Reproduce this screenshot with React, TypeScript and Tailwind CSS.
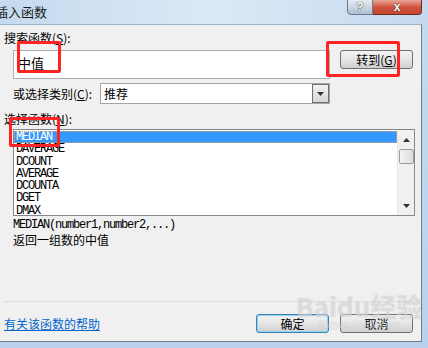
import React from "react";

const cjk = "font-['Noto_Sans_CJK_SC','Microsoft_YaHei',sans-serif]";
const mono = "font-['Liberation_Mono',monospace]";

const Arrow = ({ up, className }: { up?: boolean; className?: string }) => (
  <svg width="7" height="4" viewBox="0 0 7 4" className={className}>
    {up ? <polygon points="3.5,0 7,4 0,4" fill="#333" /> : <polygon points="0,0 7,0 3.5,4" fill="#333" />}
  </svg>
);

const Button = ({ children, focused }: { children: React.ReactNode; focused?: boolean }) => (
  <div
    className={`w-[73px] h-[19px] rounded-[3px] border flex items-center justify-center text-[12px] leading-none text-black bg-gradient-to-b from-[#f3f3f3] via-[#e6e6e6] to-[#cfcfcf] ${
      focused ? "border-[#3c7fb1] shadow-[0_0_0_1px_#8fd3f5_inset]" : "border-[#707070]"
    } ${cjk}`}
  >
    {children}
  </div>
);

const Mark = ({ className }: { className: string }) => (
  <div className={`absolute border-[3px] border-[#ff2323] rounded-[2px] pointer-events-none ${className}`} />
);

const functions = ["MEDIAN", "DAVERAGE", "DCOUNT", "AVERAGE", "DCOUNTA", "DGET", "DMAX"];

export default function App() {
  return (
    <div className="relative w-[428px] h-[348px] overflow-hidden flex flex-col bg-gradient-to-b from-[#c6daef] to-[#b9d1ea]">
      {/* title bar */}
      <div className="h-[24px] flex items-start bg-gradient-to-r from-[#c5daef] via-[#dce9f6] to-[#c4d9ee]">
        <div className={`ml-[-5px] mt-[4px] text-[13px] leading-[16px] text-[#1a1a1a] ${cjk}`}>插入函数</div>
        <div className="ml-auto mr-[6px] flex">
          <div className="w-[26px] h-[16px] mt-[-1px] rounded-bl-[4px] border border-[#6b7a8c] bg-gradient-to-b from-[#e4ecf4] via-[#c9d6e3] to-[#aebfd2] flex items-center justify-center">
            <span className="text-[12px] font-bold leading-none text-white [text-shadow:0_0_1px_#333,0_0_1px_#333] font-['Liberation_Sans',sans-serif]">?</span>
          </div>
          <div className="w-[49px] h-[16px] mt-[-1px] rounded-br-[4px] border border-l-0 border-[#6a2a22] bg-gradient-to-b from-[#e9a699] via-[#d0533e] to-[#c6462f] flex items-center justify-center">
            <span className="text-[12px] font-bold leading-none text-white [text-shadow:0_0_1px_#222,0_0_1px_#222] font-['Liberation_Sans',sans-serif]">x</span>
          </div>
        </div>
      </div>

      {/* client area */}
      <div className="mr-[6px] h-[318px] border-t border-r border-b border-t-[#9fb1c4] border-r-[#6f7d8c] border-b-[#6f7d8c] bg-[#f0f0f0] flex flex-col">
        <div className={`ml-[4px] mt-[6px] h-[14px] text-[12px] leading-[14px] text-black ${cjk}`}>
          搜索函数(<u>S</u>):
        </div>

        <div className="mt-[5px] ml-[13px] flex items-start">
          <div className={`w-[317px] h-[29px] border border-[#abadb3] bg-white pl-[4px] pt-[4px] text-[13px] leading-[16px] text-black ${cjk}`}>
            中值
          </div>
          <div className="ml-[10px]">
            <Button>
              转到(<u>G</u>)
            </Button>
          </div>
        </div>

        <div className="mt-[4px] ml-[13px] flex items-center h-[21px]">
          <div className={`w-[87px] text-[12px] leading-[14px] text-black ${cjk}`}>
            或选择类别(<u>C</u>):
          </div>
          <div className="w-[230px] h-[21px] border border-[#a5a5a5] bg-white flex">
            <div className={`flex-1 pl-[3px] text-[12px] leading-[19px] text-black ${cjk}`}>推荐</div>
            <div className="w-[17px] h-[19px] border border-[#707070] bg-gradient-to-b from-[#f2f2f2] to-[#d6d6d6] flex items-center justify-center">
              <Arrow />
            </div>
          </div>
        </div>

        <div className={`ml-[4px] mt-[8px] h-[14px] text-[12px] leading-[14px] text-black ${cjk}`}>
          选择函数(<u>N</u>):
        </div>

        <div className="mt-[3px] ml-[13px] w-[402px] h-[87px] border border-[#828790] bg-white flex">
          <div className={`flex-1 pt-[1px] text-[12px] tracking-[-1.2px] ${mono}`}>
            {functions.map((f, i) => (
              <div
                key={f}
                className={`h-[12.3px] leading-[12px] pl-[2px] ${
                  i === 0 ? "bg-[#3399ff] text-white outline-1 outline-dotted outline-offset-[-1px] outline-[#e3a35a]" : "text-black"
                }`}
              >
                {f}
              </div>
            ))}
          </div>
          <div className="w-[17px] bg-[#f0f0f0] border-l border-[#e6e6e6] flex flex-col items-center">
            <Arrow up className="mt-[8px]" />
            <div className="mt-[7px] w-[15px] h-[15px] rounded-[2px] border border-[#9c9c9c] bg-gradient-to-r from-[#f4f4f4] to-[#dcdcdc]" />
            <div className="flex-1" />
            <Arrow className="mb-[7px]" />
          </div>
        </div>

        <div className={`ml-[13px] mt-[3px] h-[13px] text-[12px] leading-[13px] tracking-[-1.2px] text-black ${mono}`}>
          MEDIAN(number1,number2,...)
        </div>
        <div className={`ml-[13px] mt-[1px] h-[14px] text-[12px] leading-[14px] text-black ${cjk}`}>
          返回一组数的中值
        </div>

        <div className="flex-1" />
        <div className="ml-[4px] mr-[6px] h-px bg-[#d3dfea]" />

        <div className="mt-[12px] mb-[8px] flex items-center h-[19px]">
          <a className={`ml-[4px] text-[12px] leading-[14px] text-[#0066cc] underline ${cjk}`}>有关该函数的帮助</a>
          <div className="ml-auto mr-[8px] flex gap-[11px]">
            <Button focused>确定</Button>
            <Button>取消</Button>
          </div>
        </div>
      </div>

      {/* annotations */}
      <Mark className="left-[17px] top-[41px] w-[44px] h-[32px]" />
      <Mark className="left-[326px] top-[41px] w-[74px] h-[36px]" />
      <Mark className="left-[9px] top-[117px] w-[51px] h-[30px]" />

      {/* watermark */}
      <div className="absolute left-[296px] top-[292px] pointer-events-none flex flex-col items-center">
        <div className={`text-[26px] font-bold leading-[28px] text-white/35 [text-shadow:0_0_1px_rgba(160,160,160,0.5)] ${cjk}`}>Baidu经验</div>
        <div className="text-[10px] leading-[10px] text-white/45 [text-shadow:0_0_1px_rgba(160,160,160,0.5)] font-['Liberation_Sans',sans-serif]">jingyan.baidu.com</div>
      </div>
    </div>
  );
}
